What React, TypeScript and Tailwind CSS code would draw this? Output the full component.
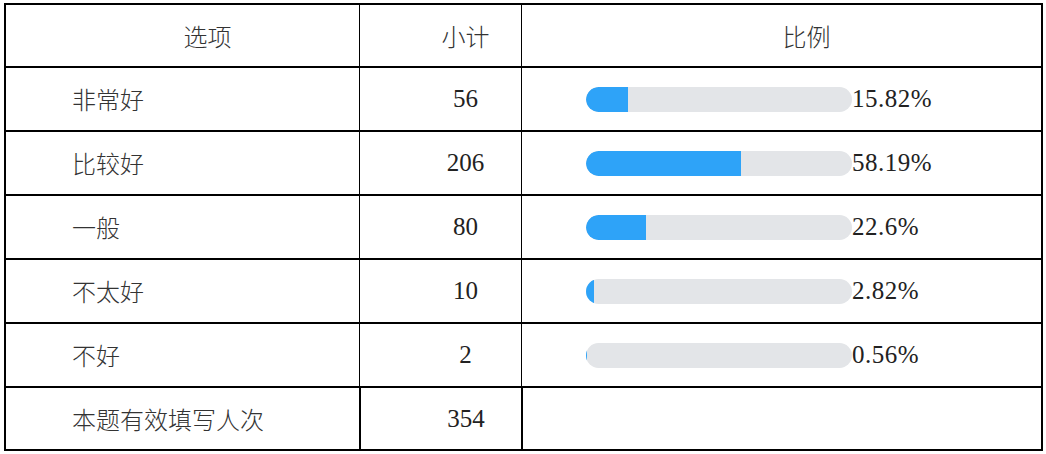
const rows = [
  { label: "非常好", count: 56, pct: 15.82 },
  { label: "比较好", count: 206, pct: 58.19 },
  { label: "一般", count: 80, pct: 22.6 },
  { label: "不太好", count: 10, pct: 2.82 },
  { label: "不好", count: 2, pct: 0.56 },
];

const cjk = "font-['Noto_Sans_CJK_SC',sans-serif] font-light text-[24px] text-[#333]";
const num = "font-['Liberation_Serif','Noto_Sans_CJK_SC',serif] text-[25px] text-[#222]";

function Bar({ pct }: { pct: number }) {
  return (
    <div className="flex items-center pl-[64px]">
      <div className="h-[25px] w-[266px] overflow-hidden rounded-full bg-[#e3e5e8]">
        <div className="h-full rounded-l-full bg-[#2ea3f8]" style={{ width: `${pct}%` }} />
      </div>
      <span className={`${num} tracking-[0.5px]`}>{pct}%</span>
    </div>
  );
}

export default function App() {
  return (
    <div className="h-[454px] w-[1046px] bg-white pl-[4px] pt-[3px]">
      <div className="w-[1039px] border-2 border-black">
        {/* header */}
        <div className="grid h-[63px] grid-cols-[354px_162px_1fr] border-b-2 border-black">
          <div className={`${cjk} flex items-center justify-center border-r border-black pl-[50px]`}>选项</div>
          <div className={`${cjk} flex items-center justify-center border-r border-black pl-[50px]`}>小计</div>
          <div className={`${cjk} flex items-center justify-center pl-[50px]`}>比例</div>
        </div>

        {rows.map((r) => (
          <div key={r.label} className="grid h-[64px] grid-cols-[354px_162px_1fr] border-b-2 border-black">
            <div className={`${cjk} flex items-center border-r border-black pl-[66px]`}>{r.label}</div>
            <div className={`${num} flex items-center justify-center border-r border-black pl-[50px]`}>{r.count}</div>
            <Bar pct={r.pct} />
          </div>
        ))}

        {/* total */}
        <div className="grid h-[61px] grid-cols-[353px_164px_1fr]">
          <div className={`${cjk} flex items-center pl-[66px]`}>本题有效填写人次</div>
          <div className={`${num} flex items-center justify-center border-x-2 border-black pl-[50px]`}>354</div>
          <div />
        </div>
      </div>
    </div>
  );
}
